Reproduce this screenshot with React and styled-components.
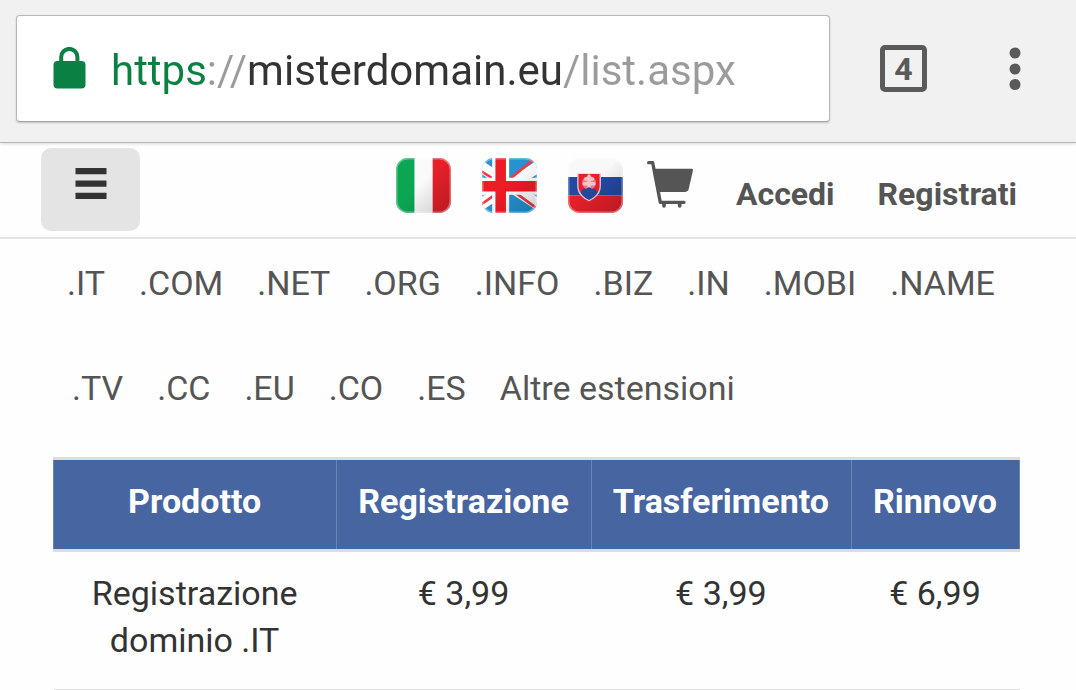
import React, { useState } from 'react';
import styled, { createGlobalStyle } from 'styled-components';

const GlobalStyle = createGlobalStyle`
  * {
    box-sizing: border-box;
  }
  body {
    margin: 0;
    background: #fefefe;
    color: #333;
    font-family: Roboto, 'Liberation Sans', sans-serif;
    font-size: 34px;
    line-height: 47px;
  }
`;

const BrowserBar = styled.header`
  position: relative;
  display: flex;
  align-items: center;
  padding: 15px 49px 20px 16px;
  background: #f1f1f1;
  border-bottom: 1px solid #b5b5b5;
  box-shadow: 0 1px 3px rgba(0, 0, 0, 0.14);
`;

const AddressBox = styled.label`
  flex: 1;
  display: flex;
  align-items: center;
  gap: 25px;
  min-width: 0;
  padding: 25px 36px 22px 36px;
  background: #fff;
  border: 1px solid #b8b8b8;
  border-bottom-color: #a5a5a5;
  border-radius: 4px;
  box-shadow: 0 1px 2px rgba(0, 0, 0, 0.2);
`;

/* the gradient stops fall between scheme, separator, host and path */
const AddressInput = styled.input`
  flex: 1;
  min-width: 0;
  height: 58px;
  padding: 0;
  border: 0;
  outline: 0;
  font-family: inherit;
  font-size: 42px;
  background: linear-gradient(
    90deg,
    #0b8043 96px,
    #9b9b9b 96px 135px,
    #333 135px 452px,
    #9b9b9b 452px
  );
  background-clip: text;
  -webkit-background-clip: text;
  -webkit-text-fill-color: transparent;
  caret-color: #333;
`;

const TabsButton = styled.button`
  width: 47px;
  height: 47px;
  margin-left: 50px;
  padding: 0;
  border: 5px solid #5a5a5a;
  border-radius: 5px;
  background: none;
  color: #5a5a5a;
  font-family: inherit;
  font-size: 32px;
  font-weight: 700;
  line-height: 36px;
`;

const MoreButton = styled.button`
  display: flex;
  margin-left: 76px;
  padding: 0 6px;
  border: 0;
  background: none;
`;

const SiteNav = styled.nav`
  display: flex;
  align-items: flex-start;
  justify-content: space-between;
  padding: 5px 59px 6px 41px;
  border-bottom: 2px solid #e4e4e4;
`;

const MenuButton = styled.button`
  display: flex;
  justify-content: center;
  width: 99px;
  height: 83px;
  padding: 20px 0 0;
  border: 0;
  border-radius: 10px;
  background: #e4e4e4;
`;

const NavItems = styled.div`
  display: flex;
  align-items: flex-start;
  padding-top: 10px;
`;

const Languages = styled.div`
  display: flex;
  gap: 31px;
`;

const IconLink = styled.a`
  display: flex;
`;

const CartLink = styled(IconLink)`
  margin: 3px 0 0 24px;
`;

const AccountLink = styled.a`
  margin: 13px 0 0 43px;
  color: #555;
  font-size: 32px;
  font-weight: 700;
  line-height: 47px;
  text-decoration: none;
`;

const Extensions = styled.nav`
  padding: 21px 53px 0 67px;
`;

const ExtensionRow = styled.ul`
  display: flex;
  flex-wrap: wrap;
  column-gap: 34px;
  margin: 0 0 58px;
  padding: 0 0 0 ${props => (props.indent ? '5px' : '0')};
  list-style: none;
`;

const ExtensionLink = styled.a`
  color: #555;
  text-decoration: none;
`;

const PriceSection = styled.main`
  padding: 0 56px 0 53px;
  margin-top: -13px;
`;

const PriceTable = styled.table`
  width: 100%;
  border-collapse: collapse;
  text-align: center;
`;

const HeadCell = styled.th`
  width: ${props => (props.wide ? 'auto' : '1%')};
  padding: 18px 22px 24px 21px;
  border: 1px solid #6d85b5;
  border-top: 3px solid #ddd;
  border-bottom: 3px solid #ddd;
  background: #4665a1;
  color: #fff;
  font-weight: 700;
  white-space: nowrap;
`;

const Cell = styled.td`
  padding: 18px 22px 25px 21px;
  border-bottom: 1px solid #ddd;
  vertical-align: top;
`;

const extensionRows = [
  ['.IT', '.COM', '.NET', '.ORG', '.INFO', '.BIZ', '.IN', '.MOBI', '.NAME'],
  ['.TV', '.CC', '.EU', '.CO', '.ES', 'Altre estensioni']
];

const products = [
  {
    name: 'Registrazione dominio .IT',
    prices: ['€ 3,99', '€ 3,99', '€ 6,99']
  }
];

const LockIcon = () => (
  <svg width="33" height="46" viewBox="0 0 33 46" aria-hidden="true">
    <path
      d="M8.2 16V10a8.1 8.1 0 0 1 16.2 0v6"
      fill="none"
      stroke="#0b8043"
      strokeWidth="4"
    />
    <rect x="0.5" y="14" width="32" height="27.5" rx="4" fill="#0b8043" />
  </svg>
);

const DotsIcon = () => (
  <svg width="12" height="44" viewBox="0 0 12 44" fill="#5a5a5a" aria-hidden="true">
    <circle cx="6" cy="6" r="5.5" />
    <circle cx="6" cy="22" r="5.5" />
    <circle cx="6" cy="37.5" r="5.5" />
  </svg>
);

const BarsIcon = () => (
  <svg width="32" height="32" viewBox="0 0 32 32" fill="#333" aria-hidden="true">
    <rect x="0.5" y="0" width="31" height="6.3" rx="0.5" />
    <rect x="0.5" y="12.5" width="31" height="6.3" rx="0.5" />
    <rect x="0.5" y="24.7" width="31" height="6.3" rx="0.5" />
  </svg>
);

const Flag = ({ id, children }) => (
  <svg width="55" height="55" viewBox="0 0 162 162" aria-hidden="true">
    <defs>
      <clipPath id={`${id}-clip`}>
        <rect width="162" height="162" rx="34" />
      </clipPath>
      <linearGradient id={`${id}-shade`} x1="0" y1="0" x2="1" y2="1">
        <stop offset="0.45" stopColor="#000" stopOpacity="0" />
        <stop offset="1" stopColor="#000" stopOpacity="0.2" />
      </linearGradient>
    </defs>
    <g clipPath={`url(#${id}-clip)`}>
      {children}
      <rect width="162" height="162" fill={`url(#${id}-shade)`} />
      <rect
        x="1"
        y="1"
        width="160"
        height="160"
        rx="33"
        fill="none"
        stroke="#fff"
        strokeOpacity="0.35"
        strokeWidth="7"
      />
    </g>
  </svg>
);

const ItalianFlag = () => (
  <Flag id="it">
    <rect width="55" height="162" fill="#0ba654" />
    <rect x="55" width="53" height="162" fill="#fafafa" />
    <rect x="108" width="54" height="162" fill="#e8202a" />
  </Flag>
);

const BritishFlag = () => (
  <Flag id="gb">
    <rect width="162" height="162" fill="#2593d2" />
    <path d="M-8 22L170 140M-8 140L170 22" stroke="#fff" strokeWidth="34" />
    <path
      d="M-4 38L50 72M-4 138L50 100M84 60L150 6M90 96L164 150"
      stroke="#ee3a45"
      strokeWidth="8"
    />
    <path d="M55 0V162M0 83H162" stroke="#fff" strokeWidth="50" />
    <path d="M55 0V162M0 83H162" stroke="#ee1c25" strokeWidth="31" />
  </Flag>
);

const SlovakFlag = () => (
  <Flag id="sk">
    <rect width="162" height="162" fill="#f8f8f8" />
    <rect y="56" width="162" height="54" fill="#2449a0" />
    <rect y="110" width="162" height="52" fill="#e5202a" />
    <path
      d="M27 46H97V82C97 106 82 118 62 128C42 118 27 106 27 82Z"
      fill="#d3c6dc"
    />
    <path
      d="M31 47H93V82C93 102 80 114 62 123C44 114 31 102 31 82Z"
      fill="#e8202d"
    />
    <ellipse cx="62" cy="73" rx="21" ry="20" fill="#f0777d" />
    <path
      d="M62 53V88M52 62H72M48 76H76"
      stroke="#f8c4c7"
      strokeWidth="10"
      strokeLinecap="round"
    />
    <path
      d="M38 102C43 90 49 88 53 92C57 84 67 84 71 92C75 88 81 90 86 102C80 113 72 118 62 123C52 118 44 113 38 102Z"
      fill="#2449a0"
    />
  </Flag>
);

const CartIcon = () => (
  <svg width="46" height="47" viewBox="0 0 138 141" aria-hidden="true">
    <path
      d="M5 5H17L40 124H111"
      fill="none"
      stroke="#555"
      strokeWidth="10"
      strokeLinecap="round"
      strokeLinejoin="round"
    />
    <path
      d="M21 23H135Q138 23 138 27L125 85Q123 93 115 93H36Z"
      fill="#555"
    />
    <path
      d="M51 127V135M98 127V135"
      stroke="#555"
      strokeWidth="11"
      strokeLinecap="round"
    />
  </svg>
);

const languages = [
  { name: 'Italiano', url: '#it', icon: ItalianFlag },
  { name: 'English', url: '#en', icon: BritishFlag },
  { name: 'Slovenčina', url: '#sk', icon: SlovakFlag }
];

const App = () => {
  const [address, setAddress] = useState('https://misterdomain.eu/list.aspx');

  return (
    <>
      <GlobalStyle />
      <BrowserBar>
        <AddressBox htmlFor="address">
          <LockIcon />
          <AddressInput
            id="address"
            type="text"
            aria-label="Indirizzo"
            spellCheck="false"
            value={address}
            onChange={event => setAddress(event.target.value)}
          />
        </AddressBox>
        <TabsButton type="button">4</TabsButton>
        <MoreButton type="button" aria-label="Altro">
          <DotsIcon />
        </MoreButton>
      </BrowserBar>

      <SiteNav>
        <MenuButton type="button" aria-label="Menu">
          <BarsIcon />
        </MenuButton>
        <NavItems>
          <Languages>
            {languages.map(({ name, url, icon: Icon }) => (
              <IconLink key={name} href={url} aria-label={name}>
                <Icon />
              </IconLink>
            ))}
          </Languages>
          <CartLink href="#carrello" aria-label="Carrello">
            <CartIcon />
          </CartLink>
          <AccountLink href="#accedi">Accedi</AccountLink>
          <AccountLink href="#registrati">Registrati</AccountLink>
        </NavItems>
      </SiteNav>

      <Extensions>
        {extensionRows.map((row, index) => (
          <ExtensionRow key={row[0]} indent={index > 0 ? 1 : 0}>
            {row.map(name => (
              <li key={name}>
                <ExtensionLink href="#listino">{name}</ExtensionLink>
              </li>
            ))}
          </ExtensionRow>
        ))}
      </Extensions>

      <PriceSection>
        <PriceTable>
          <thead>
            <tr>
              <HeadCell wide={1}>Prodotto</HeadCell>
              <HeadCell>Registrazione</HeadCell>
              <HeadCell>Trasferimento</HeadCell>
              <HeadCell>Rinnovo</HeadCell>
            </tr>
          </thead>
          <tbody>
            {products.map(product => (
              <tr key={product.name}>
                <Cell>{product.name}</Cell>
                {product.prices.map((price, index) => (
                  <Cell key={index}>{price}</Cell>
                ))}
              </tr>
            ))}
          </tbody>
        </PriceTable>
      </PriceSection>
    </>
  );
};

export default App;
